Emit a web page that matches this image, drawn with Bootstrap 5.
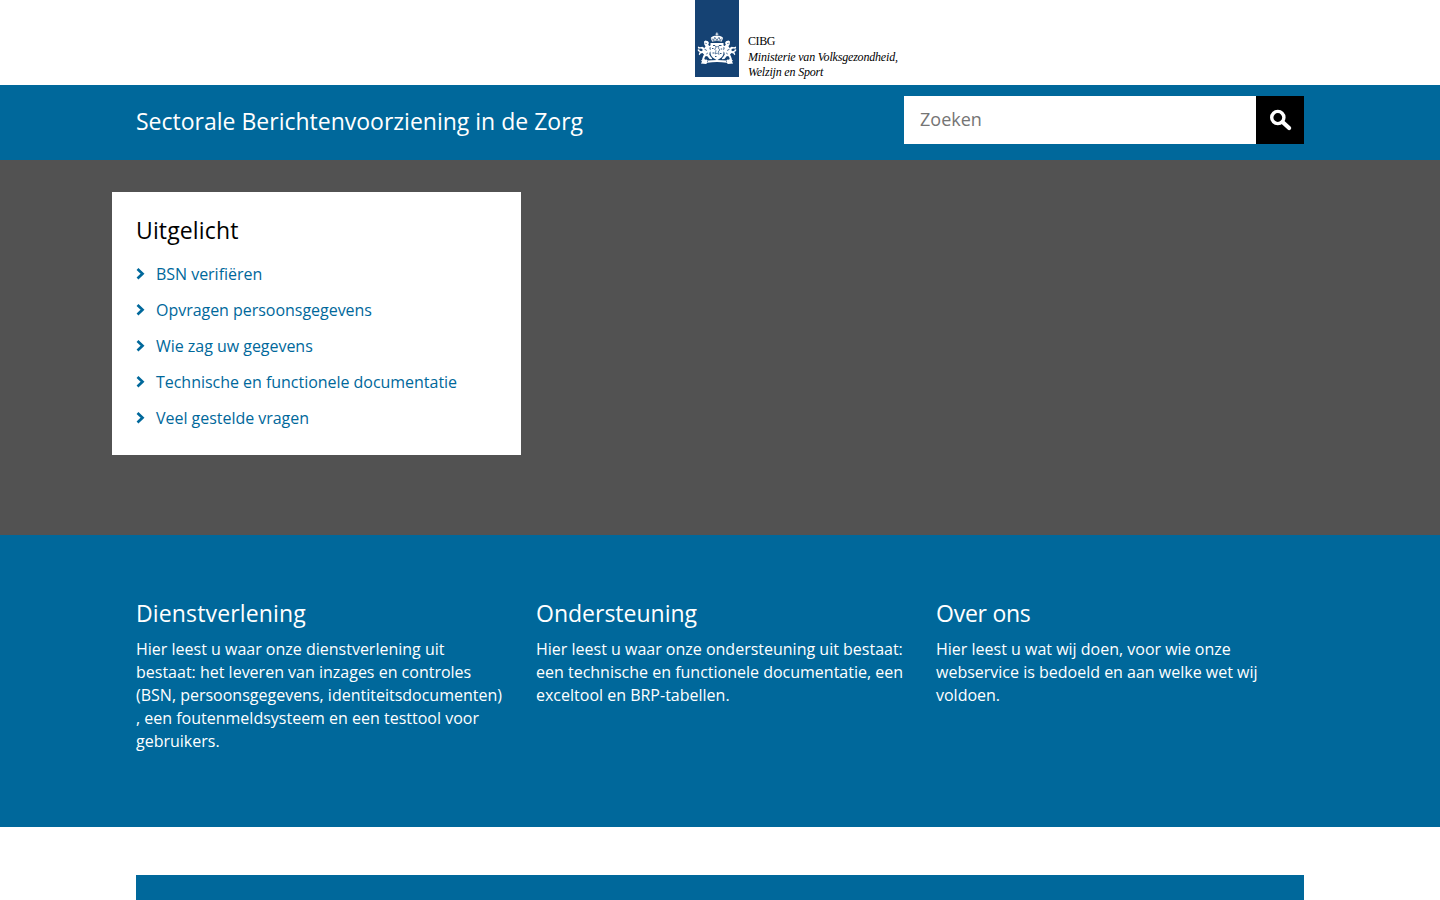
<!DOCTYPE html>
<html lang="nl">
<head>
<meta charset="utf-8">
<meta name="viewport" content="width=device-width, initial-scale=1">
<title>Sectorale Berichtenvoorziening in de Zorg</title>
<link href="https://cdn.jsdelivr.net/npm/bootstrap@5.3.0/dist/css/bootstrap.min.css" rel="stylesheet">
<style>
:root { --rijksblauw: #00689b; --lintblauw: #154273; }
body { font-family: "Open Sans", "Noto Sans", sans-serif; font-size: 16px; line-height: 23px; color: #000; overflow-x: hidden; }
.page-wrap { max-width: 1216px; padding: 0 24px; margin: 0 auto; }
.bg-rijks { background: var(--rijksblauw); }
.logo-bar { height: 85px; padding-left: 695px; }
.logo-lint { width: 44px; height: 76.500px; background: var(--lintblauw); }
.logo-text { font: italic 12px/15.5px "Liberation Serif", serif; letter-spacing: -.19px; margin: 34px 0 0 9px; white-space: nowrap; }
.logo-text .org { font-style: normal; letter-spacing: -.4px; }
.title-bar { height: 75px; }
.heading { font-size: 23px; line-height: 28px; font-weight: 400; margin: 0; }
.site-title { padding-top: 22px; }
.track-wide { letter-spacing: .14px; }
.track-tight { letter-spacing: -.25px; }
.search-box { width: 400px; height: 48px; margin-top: 11px; }
.search-box .form-control { border: 0; border-radius: 0; padding: 0 16px 1px; font-size: 18px; background: #fff; }
.search-box .form-control::placeholder { color: #757575; }
.search-box .btn { width: 48px; padding: 0; background: #000; border: 0; border-radius: 0; }
.hero { height: 375px; background: #525252; padding-top: 32px; }
.spotlight { width: 409px; height: 263px; margin-left: -24px; padding: 24px 24px 0; background: #fff; }
.spotlight a { color: var(--rijksblauw); text-decoration: none; height: 36px; letter-spacing: -.03px; }
.topics { height: 292px; padding-top: 64px; }
.topics .row { --bs-gutter-x: 32px; }
.topics p { margin: 11px -4px 0 0; }
.next-panel { height: 25px; margin-top: 48px; }
</style>
</head>
<body>
<svg class="d-none"><symbol id="chevron" viewBox="0 0 12 14"><path d="M1.500 2l5 4.700-5 4.700" fill="none" stroke="currentColor" stroke-width="2.700"/></symbol></svg>
<header>
  <div class="logo-bar d-flex bg-white">
    <div class="logo-lint">
      <svg class="d-block" width="44" height="76" viewBox="0 0 44 76" fill="#fff">
        <!-- crown -->
        <path d="M21.4 32.5h1v1.2h1v.9h-1v1h-1v-1h-1v-.9h1z"/>
        <path d="M17.2 41.7l-1.5-3.6c1-1.8 3-2.4 6.2-2.4s5.2.6 6.2 2.4l-1.5 3.6c-3-.8-6.4-.8-9.4 0z"/>
        <path d="M17 38.5l1.5 1.8 1.3-3 2.1 3 2.1-3 1.3 3 1.5-1.800M17.5 41h9" fill="none" stroke="#154273" stroke-width=".7"/>
        <!-- shield -->
        <path d="M15.5 43h13v9.500c0 4-3 6-6.500 7.700-3.500-1.700-6.500-3.700-6.500-7.700z"/>
        <path d="M18 45.500h2M24 45.500h2.500M17 48.500h1.500M25.700 49h1.500M17.500 53h2M25 53.500h1.500M20 56.500h1.500" stroke="#154273" stroke-width=".9"/>
        <path d="M20.500 46l1.500 1 1.500-1 .3 3 1.200 1-1.500 1 .4 3.500-1.500-1.500-2 1 .5-3.500-1.400-1.500 1.500-1z" fill="none" stroke="#154273" stroke-width=".6"/>
        <!-- lion supporters -->
        <g id="lion">
          <path transform="translate(1 0)" d="M8 41.500l1.500-1 2.500.7 1 1.800-.8 1.500 1 1.500 2-.8 0-1.500.7.8-.4 2-2.100 1.300.6 2.300 1.300.2.200 1-1.700.6-.5 2.600 1.700 2.700 1 .8-.1 1.300-2.300-.3-2.500-3-2 .5-.8 2.300.8 1.300-2.600.3-.5-1 1-2.800 1-2-1.500-1.500-1.800.4-1.200 1.700-.8-1 1-2.300-1.800-1-.2-1.300 1.500-.3.400 1.100 1.700.9 1.700-1.400-1.800-1.300-2.700.2-.7-1.300.4-1.100 1.700.9 2.500-.5 2 1.300 1.200-1.800-1.200-1.500z"/>
          <path d="M10.300 43.200l1.400.3M9.500 49.200l2.300 1.300M11.300 54l1.500-1" stroke="#154273" stroke-width=".8"/>
        </g>
        <use href="#lion" transform="matrix(-1 0 0 1 44 0)"/>
        <!-- motto ribbon -->
        <path d="M6 60.200l5.500-.6 1.500 1c6-.9 12-.9 18 0l1.500-1 5.500.6-1 1.600 1.200 1.800-5.200.4-1.500-1.300c-6-.9-13-.9-19 0L11 64l-5.200-.4L7 61.800z"/>
        <path d="M12.500 60.500v1.800M31.500 60.500v1.800" stroke="#154273" stroke-width=".6"/>
      </svg>
    </div>
    <div class="logo-text"><span class="org">CIBG</span><br>Ministerie van Volksgezondheid,<br>Welzijn en Sport</div>
  </div>
  <div class="title-bar bg-rijks">
    <div class="page-wrap d-flex justify-content-between">
      <div class="heading site-title text-white">Sectorale Berichtenvoorziening in de Zorg</div>
      <form class="search-box d-flex">
        <input class="form-control shadow-none" type="search" placeholder="Zoeken" aria-label="Zoeken">
        <button class="btn d-flex align-items-center justify-content-center flex-shrink-0" type="button" aria-label="Zoeken">
          <svg width="48" height="48" viewBox="0 0 48 48" fill="none" stroke="#fff">
            <circle cx="21.800" cy="21.500" r="6.100" stroke-width="3.400"/>
            <path d="M26.800 26.300l6.300 5.700" stroke-width="4.200" stroke-linecap="round"/>
          </svg>
        </button>
      </form>
    </div>
  </div>
</header>
<main>
  <section class="hero">
    <div class="page-wrap">
      <div class="spotlight">
        <h2 class="heading track-wide">Uitgelicht</h2>
        <nav class="d-flex flex-column pt-2 mt-1" aria-label="Uitgelicht">
          <a class="d-flex align-items-center" href="#"><svg class="me-2 flex-shrink-0" width="12" height="14"><use href="#chevron"/></svg>BSN verifiëren</a>
          <a class="d-flex align-items-center" href="#"><svg class="me-2 flex-shrink-0" width="12" height="14"><use href="#chevron"/></svg>Opvragen persoonsgegevens</a>
          <a class="d-flex align-items-center" href="#"><svg class="me-2 flex-shrink-0" width="12" height="14"><use href="#chevron"/></svg>Wie zag uw gegevens</a>
          <a class="d-flex align-items-center" href="#"><svg class="me-2 flex-shrink-0" width="12" height="14"><use href="#chevron"/></svg>Technische en functionele documentatie</a>
          <a class="d-flex align-items-center" href="#"><svg class="me-2 flex-shrink-0" width="12" height="14"><use href="#chevron"/></svg>Veel gestelde vragen</a>
        </nav>
      </div>
    </div>
  </section>
  <section class="topics bg-rijks text-white">
    <div class="page-wrap">
      <div class="row">
        <div class="col-4">
          <h2 class="heading track-wide">Dienstverlening</h2>
          <p>Hier leest u waar onze dienstverlening uit<br>bestaat: het leveren van inzages en controles<br>(BSN, persoonsgegevens, identiteitsdocumenten)<br>, een foutenmeldsysteem en een testtool voor<br>gebruikers.</p>
        </div>
        <div class="col-4">
          <h2 class="heading">Ondersteuning</h2>
          <p>Hier leest u waar onze ondersteuning uit bestaat:<br>een technische en functionele documentatie, een<br>exceltool en BRP-tabellen.</p>
        </div>
        <div class="col-4">
          <h2 class="heading track-tight">Over ons</h2>
          <p>Hier leest u wat wij doen, voor wie onze<br>webservice is bedoeld en aan welke wet wij<br>voldoen.</p>
        </div>
      </div>
    </div>
  </section>
  <div class="page-wrap"><div class="next-panel bg-rijks"></div></div>
</main>
<script src="https://cdn.jsdelivr.net/npm/bootstrap@5.3.0/dist/js/bootstrap.bundle.min.js"></script>
</body>
</html>
